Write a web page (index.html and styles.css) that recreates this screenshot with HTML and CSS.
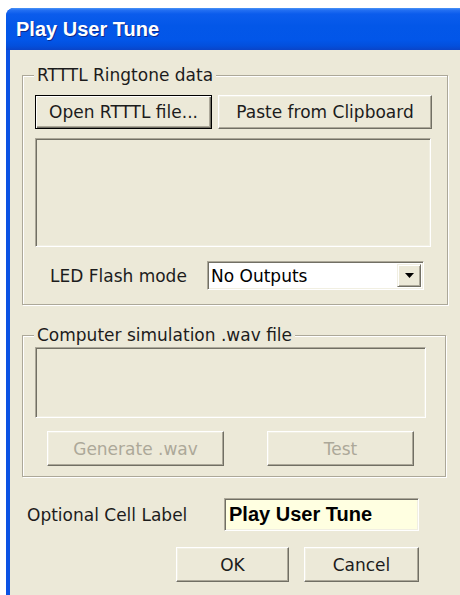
FILE: index.html
```html
<!DOCTYPE html>
<html>
<head>
<meta charset="utf-8">
<title>Play User Tune</title>
<link rel="stylesheet" href="styles.css">
</head>
<body>
<div class="window">
  <div class="titlebar"><span class="title">Play User Tune</span></div>
  <div class="client">
    <fieldset class="group group-rtttl">
      <legend>RTTTL Ringtone data</legend>
      <div class="btn-row">
        <button class="btn btn-default btn-open">Open RTTTL file...</button>
        <button class="btn btn-paste">Paste from Clipboard</button>
      </div>
      <div class="field field-rtttl"></div>
      <div class="led-row">
        <span class="label">LED Flash mode</span>
        <div class="combo">
          <span class="combo-text">No Outputs</span>
          <span class="combo-btn">
            <svg width="9" height="5" viewBox="0 0 9 5"><path d="M0 0H9L4.5 5Z" fill="#000"/></svg>
          </span>
        </div>
      </div>
    </fieldset>

    <fieldset class="group group-wav">
      <legend>Computer simulation .wav file</legend>
      <div class="field field-wav"></div>
      <div class="wav-row">
        <button class="btn btn-generate" disabled>Generate .wav</button>
        <button class="btn btn-test" disabled>Test</button>
      </div>
    </fieldset>

    <div class="cell-row">
      <span class="label">Optional Cell Label</span>
      <div class="cell-input">Play User Tune</div>
    </div>

    <div class="action-row">
      <button class="btn btn-ok">OK</button>
      <button class="btn btn-cancel">Cancel</button>
    </div>
  </div>
</div>
</body>
</html>
```

FILE: styles.css
```css
html, body {
  margin: 0;
  padding: 0;
  background: #fff;
  overflow: hidden;
  width: 460px;
  height: 595px;
}

body {
  font-family: "DejaVu Sans", Verdana, sans-serif;
  font-size: 17px;
  color: #1c1c1c;
}

/* dialog frame: only the left edge is in view, it runs off the right */
.window {
  margin: 8px 0 0 6px;
  height: 587px;
  box-sizing: border-box;
  border-left: 4px solid #0b52e4;
  border-radius: 8px 0 0 0;
  background: #0b52e4;
  display: flex;
  flex-direction: column;
}

.titlebar {
  height: 42px;
  margin-left: -4px;
  border-radius: 8px 0 0 0;
  background: linear-gradient(#4a95f7 0px, #2470f2 2px, #0b5cec 6px, #0357e8 18px, #0256e9 32px, #034fdc 38px, #0a44c8 42px);
  display: flex;
  align-items: center;
  padding-left: 10px;
  box-sizing: border-box;
}

.title {
  font-family: "Liberation Sans", Arial, sans-serif;
  font-weight: bold;
  font-size: 20px;
  color: #fff;
  text-shadow: 1px 1px 0 #0a2a8e;
  margin-top: 1px;
}

.client {
  flex: 1;
  background: #ece9d8;
  padding: 15px 0 0 12px;
}

/* etched group boxes */
.group {
  margin: 0;
  width: 424px;
  box-sizing: border-box;
  border: 1px solid #aca899;
  box-shadow: inset 1px 1px 0 #fff, 1px 1px 0 #fff;
  padding: 10px 15px 14px 12px;
}

.group legend {
  padding: 0 3px;
  margin-left: -1px;
  background: #ece9d8;
  line-height: 20px;
  font-size: 17px;
}

.group-wav {
  margin-top: 20px;
  padding-top: 2px;
  padding-bottom: 10px;
}

/* 3D push buttons */
.btn {
  font-family: "DejaVu Sans", Verdana, sans-serif;
  font-size: 17px;
  color: #1c1c1c;
  background: #ece9d8;
  border-style: solid;
  border-width: 1px;
  border-color: #fff #716f64 #716f64 #fff;
  box-shadow: inset -1px -1px 0 #aca899, inset 1px 1px 0 #f1efe2;
  padding: 0;
  margin: 0;
  white-space: nowrap;
}

.btn-default {
  border-color: #000;
  box-shadow: inset 1px 1px 0 #fff, inset -1px -1px 0 #716f64, inset -2px -2px 0 #aca899;
}

.btn:disabled {
  color: #aca899;
}

.btn-row {
  display: flex;
  gap: 6px;
}

.btn-open { width: 177px; height: 34px; }
.btn-paste { width: 214px; height: 34px; }

/* sunken read-only fields */
.field {
  box-sizing: border-box;
  border-style: solid;
  border-width: 1px;
  border-color: #aca899 #fff #fff #aca899;
  box-shadow: inset 1px 1px 0 #716f64, inset -1px -1px 0 #f1efe2;
  background: #ece9d8;
}

.field-rtttl {
  width: 396px;
  height: 109px;
  margin-top: 9px;
}

.field-wav {
  width: 391px;
  height: 71px;
}

.led-row {
  display: flex;
  align-items: center;
  margin-top: 14px;
  padding-left: 15px;
}

.led-row .label {
  width: 157px;
}

.combo {
  box-sizing: border-box;
  width: 217px;
  height: 29px;
  display: flex;
  align-items: stretch;
  background: #fff;
  border-style: solid;
  border-width: 1px;
  border-color: #aca899 #fff #fff #aca899;
  box-shadow: inset 1px 1px 0 #716f64, inset -1px -1px 0 #f1efe2;
  padding: 2px;
}

.combo-text {
  flex: 1;
  display: flex;
  align-items: center;
  padding-left: 1px;
  color: #000;
}

.combo-btn {
  width: 24px;
  box-sizing: border-box;
  display: flex;
  align-items: center;
  justify-content: center;
  background: #ece9d8;
  border-style: solid;
  border-width: 1px;
  border-color: #f1efe2 #716f64 #716f64 #f1efe2;
  box-shadow: inset 1px 1px 0 #fff, inset -1px -1px 0 #aca899;
}

.wav-row {
  display: flex;
  margin-top: 13px;
  padding-left: 12px;
  gap: 43px;
}

.btn-generate { width: 177px; height: 35px; }
.btn-test { width: 147px; height: 35px; }

.cell-row {
  display: flex;
  align-items: center;
  margin-top: 21px;
  padding-left: 5px;
}

.cell-row .label {
  width: 197px;
}

.cell-input {
  box-sizing: border-box;
  width: 195px;
  height: 33px;
  background: #ffffe1;
  border-style: solid;
  border-width: 1px;
  border-color: #aca899 #fff #fff #aca899;
  box-shadow: inset 1px 1px 0 #716f64, inset -1px -1px 0 #f1efe2;
  font-family: "Liberation Sans", Arial, sans-serif;
  font-weight: bold;
  font-size: 20px;
  color: #000;
  display: flex;
  align-items: center;
  padding-left: 4px;
}

.action-row {
  display: flex;
  gap: 15px;
  margin-top: 16px;
  padding-left: 154px;
}

.btn-ok { width: 113px; height: 35px; }
.btn-cancel { width: 115px; height: 35px; }
```
